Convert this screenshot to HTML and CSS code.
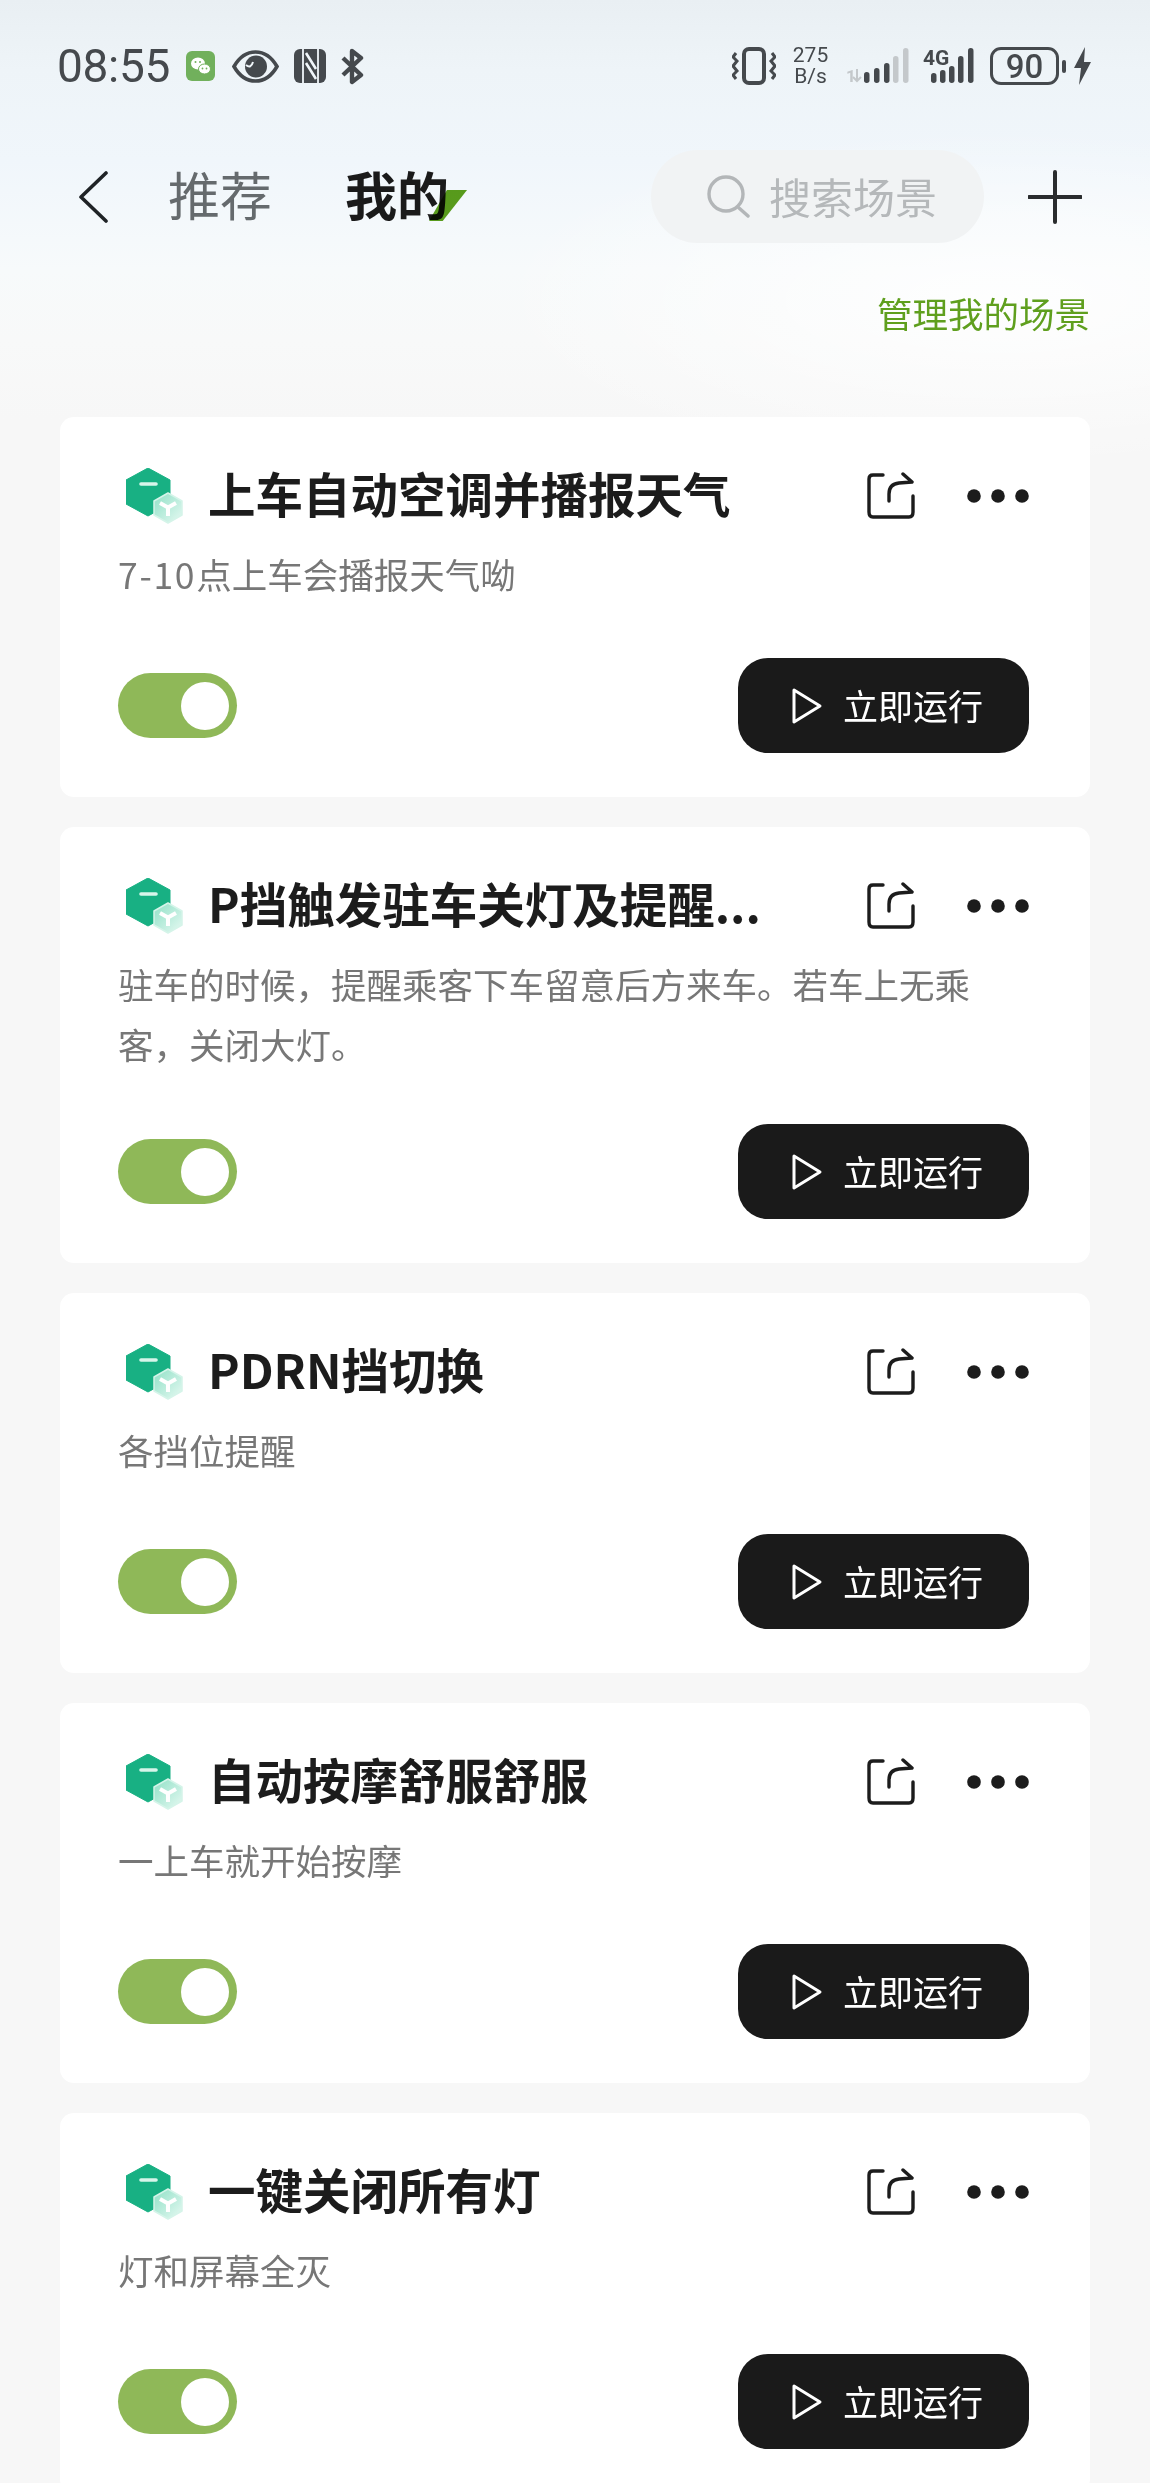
FILE: index.html
```html
<!DOCTYPE html>
<html lang="zh-CN">
<head>
<meta charset="utf-8">
<title>我的场景</title>
<link rel="stylesheet" href="styles.css">
</head>
<body>
<svg class="defs" width="0" height="0">
  <defs>
    <linearGradient id="glass" x1="0" y1="0" x2="1" y2="1">
      <stop offset="0" stop-color="#8fe0c6"/>
      <stop offset="1" stop-color="#e6f9f2"/>
    </linearGradient>
  </defs>
  <symbol id="hex" viewBox="0 0 58 57">
    <path d="M22 0 44 12V36L22 48 0 36V12Z" fill="#18b083" stroke="#18b083" stroke-width="1" stroke-linejoin="round"/>
    <path d="M15 16H30" stroke="#d8f5ea" stroke-width="3.600" stroke-linecap="round"/>
    <path d="M42 25 56 33V47L42 55 28 47V33Z" fill="url(#glass)" stroke="#d5f4e9" stroke-width="1.500" stroke-linejoin="round"/>
    <path d="M34 35 42 39.500 50 35M42 39.500V48" fill="none" stroke="#fff" stroke-width="4"/>
  </symbol>
  <symbol id="share" viewBox="0 0 50 48">
    <path d="M17 3H7Q3 3 3 7V40Q3 45 7 45H43Q47 45 47 40V24" fill="none" stroke="#1c1c1c" stroke-width="3.400" stroke-linecap="round"/>
    <path d="M23 29V22Q23 12 33 11L46 10M37 2 46 10" fill="none" stroke="#1c1c1c" stroke-width="3.400" stroke-linecap="round" stroke-linejoin="round"/>
  </symbol>
  <symbol id="dots" viewBox="0 0 62 14">
    <circle cx="7" cy="7" r="6.800" fill="#1c1c1c"/>
    <circle cx="31" cy="7" r="6.800" fill="#1c1c1c"/>
    <circle cx="55" cy="7" r="6.800" fill="#1c1c1c"/>
  </symbol>
  <symbol id="play" viewBox="0 0 32 38">
    <path d="M3 3 29 19 3 35Z" fill="none" stroke="#fff" stroke-width="3" stroke-linejoin="round"/>
  </symbol>
</svg>

<div class="page">
  <header class="status">
    <div class="status-group">
      <span class="time">08:55</span>
      <svg class="ic-wechat" viewBox="0 0 29 30"><rect width="29" height="30" rx="6" fill="#71b05c"/><ellipse cx="12" cy="12.500" rx="7" ry="6" fill="#fff"/><ellipse cx="18.500" cy="18" rx="6" ry="5" fill="#fff" stroke="#71b05c"/><circle cx="9.500" cy="11" r="1" fill="#71b05c"/><circle cx="14" cy="11" r="1" fill="#71b05c"/><circle cx="16.500" cy="17.500" r=".9" fill="#71b05c"/><circle cx="20.500" cy="17.500" r=".9" fill="#71b05c"/></svg>
      <svg class="ic-eye" viewBox="0 0 47 33"><path d="M2 16.500C8 6 15 2 23.500 2S39 6 45 16.500C39 27 32 31 23.500 31S8 27 2 16.500Z" fill="none" stroke="#45494d" stroke-width="3.600"/><circle cx="24" cy="16.500" r="11" fill="#45494d"/><path d="M14 15Q19 19 21 12" fill="none" stroke="#f0f6fa" stroke-width="2"/></svg>
      <svg class="ic-nfc" viewBox="0 0 32 34"><rect width="32" height="34" rx="6" fill="#45494d"/><path d="M9 0V34M24 0V34" stroke="#f0f6fa" stroke-width="1.800"/><path d="M12 4 22 20M12 14 22 30" stroke="#f0f6fa" stroke-width="2.600"/></svg>
      <svg class="ic-bt" viewBox="0 0 25 37"><path d="M3 10 21 27 12 34V3L21 10 3 27" fill="none" stroke="#45494d" stroke-width="4.400" stroke-linejoin="round"/></svg>
    </div>
    <div class="status-group">
      <svg class="ic-vib" viewBox="0 0 44 38"><rect x="12" y="2" width="20" height="34" rx="5" fill="none" stroke="#45494d" stroke-width="4"/><path d="M4 6 1 10 5 14 1 19 5 24 1 28 4 32M40 6 43 10 39 14 43 19 39 24 43 28 40 32" fill="none" stroke="#45494d" stroke-width="3"/></svg>
      <div class="speed"><span>275</span><span>B/s</span></div>
      <svg class="ic-sig" viewBox="0 0 63 38"><text x="0" y="35" class="sig-small">1</text><path d="M11 22V34M7 30 11 34 15 30" fill="none" stroke="#c4c8cb" stroke-width="2"/><g fill="#45494d"><rect x="18" y="25" width="5.500" height="11" rx="2.700"/><rect x="28" y="21" width="5.500" height="15" rx="2.700"/><rect x="38" y="16" width="5.500" height="20" rx="2.700"/></g><g fill="#c4c8cb"><rect x="47" y="9" width="5.500" height="27" rx="2.700"/><rect x="57" y="1" width="5.500" height="35" rx="2.700"/></g></svg>
      <svg class="ic-4g" viewBox="0 0 52 38"><text x="0" y="18" class="sig-4g">4G</text><g fill="#45494d"><rect x="8" y="26" width="5.500" height="10" rx="2.700"/><rect x="17" y="23" width="5.500" height="13" rx="2.700"/><rect x="26" y="19" width="5.500" height="17" rx="2.700"/><rect x="35" y="9" width="5.500" height="27" rx="2.700"/><rect x="45" y="1" width="5.500" height="35" rx="2.700"/></g></svg>
      <div class="battery"><span>90</span></div>
      <span class="battery-nub"></span>
      <svg class="ic-bolt" viewBox="0 0 17 38"><path d="M11 0 0 21H7L5 38 17 15H10Z" fill="#45494d"/></svg>
    </div>
  </header>

  <nav class="nav">
    <svg class="ic-back" viewBox="0 0 30 52"><path d="M28 2 3 26 28 50" fill="none" stroke="#1f2326" stroke-width="3.600" stroke-linecap="round" stroke-linejoin="round"/></svg>
    <span class="tab">推荐</span>
    <span class="tab tab-active">我的<i class="tab-mark"></i></span>
    <div class="search">
      <svg class="ic-search" viewBox="0 0 43 43"><circle cx="19" cy="19" r="17" fill="none" stroke="#b3b6b8" stroke-width="3.400"/><path d="M32 33 41 41" stroke="#b3b6b8" stroke-width="3.400" stroke-linecap="round"/></svg>
      <span>搜索场景</span>
    </div>
    <svg class="ic-plus" viewBox="0 0 54 54"><path d="M27 2V52M1 27H53" stroke="#2a2c2e" stroke-width="4" stroke-linecap="round"/></svg>
  </nav>

  <div class="manage">管理我的场景</div>

  <main class="list">
    <article class="card">
      <div class="card-head">
        <svg class="ic-hex"><use href="#hex"/></svg>
        <h2 class="card-title">上车自动空调并播报天气</h2>
        <svg class="ic-share"><use href="#share"/></svg>
        <svg class="ic-dots"><use href="#dots"/></svg>
      </div>
      <p class="card-desc"><span class="num">7-10</span>点上车会播报天气呦</p>
      <div class="card-foot">
        <div class="toggle"><span class="knob"></span></div>
        <button class="run"><svg class="ic-play"><use href="#play"/></svg><span class="run-label">立即运行</span></button>
      </div>
    </article>
    <article class="card">
      <div class="card-head">
        <svg class="ic-hex"><use href="#hex"/></svg>
        <h2 class="card-title">P挡触发驻车关灯及提醒...</h2>
        <svg class="ic-share"><use href="#share"/></svg>
        <svg class="ic-dots"><use href="#dots"/></svg>
      </div>
      <p class="card-desc card-desc-two">驻车的时候，提醒乘客下车留意后方来车。若车上无乘客，关闭大灯。</p>
      <div class="card-foot">
        <div class="toggle"><span class="knob"></span></div>
        <button class="run"><svg class="ic-play"><use href="#play"/></svg><span class="run-label">立即运行</span></button>
      </div>
    </article>
    <article class="card">
      <div class="card-head">
        <svg class="ic-hex"><use href="#hex"/></svg>
        <h2 class="card-title">PDRN挡切换</h2>
        <svg class="ic-share"><use href="#share"/></svg>
        <svg class="ic-dots"><use href="#dots"/></svg>
      </div>
      <p class="card-desc">各挡位提醒</p>
      <div class="card-foot">
        <div class="toggle"><span class="knob"></span></div>
        <button class="run"><svg class="ic-play"><use href="#play"/></svg><span class="run-label">立即运行</span></button>
      </div>
    </article>
    <article class="card">
      <div class="card-head">
        <svg class="ic-hex"><use href="#hex"/></svg>
        <h2 class="card-title">自动按摩舒服舒服</h2>
        <svg class="ic-share"><use href="#share"/></svg>
        <svg class="ic-dots"><use href="#dots"/></svg>
      </div>
      <p class="card-desc">一上车就开始按摩</p>
      <div class="card-foot">
        <div class="toggle"><span class="knob"></span></div>
        <button class="run"><svg class="ic-play"><use href="#play"/></svg><span class="run-label">立即运行</span></button>
      </div>
    </article>
    <article class="card">
      <div class="card-head">
        <svg class="ic-hex"><use href="#hex"/></svg>
        <h2 class="card-title">一键关闭所有灯</h2>
        <svg class="ic-share"><use href="#share"/></svg>
        <svg class="ic-dots"><use href="#dots"/></svg>
      </div>
      <p class="card-desc">灯和屏幕全灭</p>
      <div class="card-foot">
        <div class="toggle"><span class="knob"></span></div>
        <button class="run"><svg class="ic-play"><use href="#play"/></svg><span class="run-label">立即运行</span></button>
      </div>
    </article>
  </main>
</div>
</body>
</html>
```
FILE: styles.css
```css
* { box-sizing: border-box; }
html, body { margin: 0; padding: 0; height: 2483px; overflow: hidden; }
body {
  font-family: "Noto Sans CJK SC", "Noto Sans", sans-serif;
  background: #f7f7f7;
}
.defs { position: absolute; }
.page {
  height: 2483px;
  overflow: hidden;
  background:
    radial-gradient(ellipse 520px 170px at 1000px 300px, rgba(255,255,255,.85), rgba(255,255,255,0)),
    linear-gradient(180deg, #e9eff3 0, #eef4f8 70px, #f0f6fb 160px, #f7fafb 270px, #f8f9f9 340px, #f7f7f7 420px);
}

.status {
  display: flex;
  justify-content: space-between;
  padding: 47px 59px 0 57px;
  height: 85px;
}
.status-group { display: flex; align-items: center; height: 38px; }
.time {
  width: 111px;
  font-family: Roboto, sans-serif;
  font-size: 46px;
  line-height: 38px;
  color: #45494d;
  margin-right: 18px;
  letter-spacing: -.3px;
}
.ic-wechat { width: 29px; height: 30px; margin-right: 17px; }
.ic-eye { width: 47px; height: 33px; margin-right: 15px; }
.ic-nfc { width: 32px; height: 34px; margin-right: 14px; }
.ic-bt { width: 25px; height: 37px; }
.ic-vib { width: 44px; height: 38px; margin-right: 15px; }
.speed {
  width: 39px;
  margin-right: 16px;
  display: flex;
  flex-direction: column;
  align-items: center;
  font-family: Roboto, sans-serif;
  font-size: 21px;
  line-height: 21px;
  color: #45494d;
}
.ic-sig { width: 63px; height: 38px; margin-right: 14px; }
.ic-4g { width: 52px; height: 38px; margin-right: 15px; }
.sig-small { font: 700 17px Roboto, sans-serif; fill: #c4c8cb; }
.sig-4g { font: 700 21px Roboto, sans-serif; fill: #45494d; }
.battery {
  width: 69px;
  height: 38px;
  border: 3px solid #45494d;
  border-radius: 11px;
  display: flex;
  align-items: center;
  justify-content: center;
  font-family: Roboto, sans-serif;
  font-size: 33px;
  font-weight: 500;
  color: #45494d;
}
.battery-nub { width: 4px; height: 13px; margin: 0 8px 0 3px; background: #45494d; border-radius: 2px; }
.ic-bolt { width: 17px; height: 38px; }

.nav {
  display: flex;
  align-items: center;
  height: 93px;
  margin-top: 65px;
  padding-left: 78px;
}
.ic-back { width: 30px; height: 52px; margin-right: 60px; }
.tab {
  font-size: 52px;
  line-height: 87px;
  padding-bottom: 6px;
  color: #656a6d;
  margin-right: 73px;
  position: relative;
}
.tab-active { color: #1a1a1a; font-weight: 700; margin-right: 202px; }
.tab-mark {
  position: absolute;
  right: -18px;
  bottom: 22px;
  width: 38px;
  height: 31px;
  background: #5c9f1c;
  clip-path: polygon(47% 0, 100% 0, 36% 100%, 0 100%);
  mix-blend-mode: multiply;
}
.search {
  width: 333px;
  height: 93px;
  border-radius: 47px;
  background: #f1f3f4;
  display: flex;
  align-items: center;
  padding-left: 56px;
  font-size: 42px;
  color: #b5b8ba;
}
.search span { padding-bottom: 3px; }
.ic-search { width: 43px; height: 43px; margin-right: 19px; }
.ic-plus { width: 54px; height: 54px; margin-left: 44px; }

.manage {
  margin-top: 45px;
  padding-right: 60px;
  text-align: right;
  font-size: 35.500px;
  line-height: 50px;
  color: #5f9f1e;
}

.list {
  margin: 79px 60px 0;
  display: flex;
  flex-direction: column;
  gap: 30px;
}
.card {
  flex: none;
  background: #fff;
  border-radius: 14px;
  padding: 51px 61px 44px 58px;
}
.card-head { display: flex; align-items: center; height: 56px; }
.ic-hex { width: 58px; height: 57px; margin-left: 8px; flex: none; }
.card-title {
  flex: 1;
  margin: 0 0 6px 24px;
  font-size: 47.500px;
  line-height: 50px;
  font-weight: 700;
  color: #1c1c1c;
  white-space: nowrap;
}
.ic-share { width: 50px; height: 48px; flex: none; margin-right: 51px; }
.ic-dots { width: 62px; height: 14px; flex: none; }
.card-desc {
  margin: 20px 0 54px;
  font-size: 35.500px;
  line-height: 60px;
  color: #777;
  width: 880px;
}
.card-desc-two { margin-bottom: 50px; }
.num { letter-spacing: 1.700px; }
.card-foot { display: flex; align-items: center; justify-content: space-between; }
.toggle {
  width: 119px;
  height: 65px;
  border-radius: 33px;
  background: #8fb858;
  display: flex;
  align-items: center;
  justify-content: flex-end;
  padding-right: 8px;
}
.knob { width: 48px; height: 48px; border-radius: 50%; background: #fff; }
.run {
  width: 291px;
  height: 95px;
  border: 0;
  border-radius: 30px;
  background: #1a1a1a;
  color: #fff;
  font: 400 35px "Noto Sans CJK SC", sans-serif;
  display: flex;
  align-items: center;
  padding: 0 0 0 53px;
}
.run-label { padding-bottom: 3px; margin-left: -1px; }
.ic-play { width: 32px; height: 38px; margin-right: 21px; flex: none; }
```
